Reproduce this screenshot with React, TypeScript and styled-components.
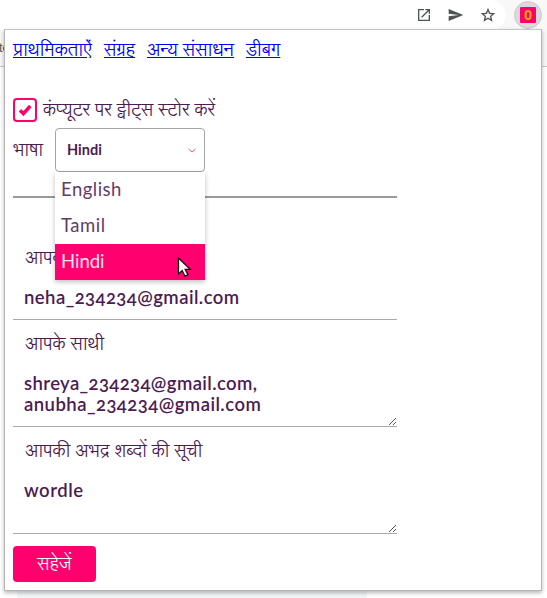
import React from "react";
import styled, { createGlobalStyle, css } from "styled-components";

const PINK = "#ff006e";
const PLUM = "#4c1b52";

const GlobalStyle = createGlobalStyle`
  * { box-sizing: border-box; }
  html, body { margin: 0; padding: 0; background: #fff; overflow: hidden; }
`;

const Browser = styled.div`
  position: relative;
  width: 547px;
  height: 598px;
  overflow: hidden;
  background: #fff;
  color: ${PLUM};
  font-family: Lato, "Lohit Devanagari", "Noto Sans Devanagari", "Noto Sans", sans-serif;
`;

const ChromeBar = styled.div`
  height: 30px;
  background: #f8f8f8;
  display: flex;
`;

const AddressBar = styled.div`
  width: 506px;
  height: 30px;
  background: #fff;
  border-radius: 0 15px 15px 0;
  display: flex;
  align-items: center;
  justify-content: flex-end;
  gap: 16px;
  padding-right: 10px;
`;

const ExtensionButton = styled.div`
  width: 28px;
  height: 28px;
  margin: 1px 0 0 8px;
  border-radius: 50%;
  background: #dadada;
  border: 1px solid #cacaca;
  display: flex;
  align-items: center;
  justify-content: center;
`;

const Badge = styled.div`
  width: 16px;
  height: 16px;
  border-radius: 1px;
  background: ${PINK};
  color: #ffa500;
  font: bold 14px/16px "Open Sans", sans-serif;
  text-align: center;
`;

const BookmarkBar = styled.div`
  height: 37px;
  background: #f7f7f7;
  border-bottom: 1px solid #c8c8c8;
  color: #555;
  font: 13px/35px "Liberation Sans", sans-serif;
  text-indent: -1px;
`;

const Popup = styled.main`
  position: absolute;
  left: 4px;
  top: 29px;
  width: 538px;
  height: 562px;
  padding: 7px 8px 0;
  background: #fff;
  border: 1px solid #b5b5b5;
  border-top-color: #c6c6c6;
  box-shadow: 0 2px 4px rgba(0, 0, 0, 0.28);
`;

const Latin = styled.span<{ $track?: number }>`
  letter-spacing: ${(p) => p.$track ?? 0}px;
  font-feature-settings: "onum" 1;
  white-space: pre;
`;

const Hindi = styled.span`
  font-size: 17.900px;
  font-weight: 300;
  white-space: pre;
`;

const Nav = styled.nav`
  display: flex;
  height: 61px;
  line-height: 24px;
`;

const NavLink = styled.a<{ $width: number }>`
  width: ${(p) => p.$width}px;
  margin-right: 12px;
  height: 24px;
  font-size: 18px;
  font-weight: 300;
  line-height: 24px;
  white-space: nowrap;
  color: #0000ee;
  text-decoration: underline;
`;

const CheckRow = styled.label`
  display: flex;
  align-items: center;
  height: 24px;
  gap: 6px;

  ${Hindi} {
    padding-top: 2px;
  }
`;

const CheckBox = styled.span`
  width: 24px;
  height: 24px;
  border: 2px solid ${PINK};
  border-radius: 4px;
  display: flex;
  align-items: center;
  justify-content: center;
`;

const LanguageRow = styled.div`
  display: flex;
  align-items: center;
  height: 44px;
  margin-top: 6px;
`;

const LanguageLabel = styled.span`
  width: 42px;
  padding-top: 2px;
  white-space: nowrap;
`;

const SelectWrap = styled.div`
  position: relative;
  width: 150px;
  height: 44px;
`;

const SelectButton = styled.div`
  height: 44px;
  border: 1px solid #a5a5a5;
  border-radius: 4px;
  padding: 0 7px 1px 11px;
  display: flex;
  align-items: center;
  justify-content: space-between;
  font-size: 14.500px;
  font-weight: 700;
  line-height: 18px;
`;

const Menu = styled.div`
  position: absolute;
  z-index: 2;
  top: 44px;
  left: 0;
  width: 150px;
  background: #fff;
  box-shadow: 0 2px 5px rgba(0, 0, 0, 0.25);
`;

const MenuItem = styled.div<{ $active?: boolean }>`
  height: 36px;
  padding-left: 6px;
  font-size: 18.500px;
  font-weight: 400;
  line-height: 35px;
  color: #643a69;
  ${(p) => p.$active && css`
    background: ${PINK};
    color: #ffe3ef;
  `}
`;

const Cursor = styled.svg`
  position: absolute;
  left: 122px;
  top: 85px;
`;

const Rule = styled.hr`
  width: 384px;
  height: 2px;
  margin: 24px 0 36px;
  border: 0;
  background: #999;
`;

const Field = styled.section<{ $height: number }>`
  position: relative;
  width: 384px;
  height: ${(p) => p.$height}px;
  padding: 11px 11px 0;
  border-bottom: 1px solid #aaa;
`;

const FieldLabel = styled.div`
  height: 24px;
  padding-left: 1px;
  line-height: 24px;
`;

const FieldValue = styled.div`
  margin-top: 18px;
  font-size: 18.500px;
  font-weight: 600;
  line-height: 21px;
  display: flex;
  flex-direction: column;
`;

const Grip = styled.svg`
  position: absolute;
  right: 0;
  bottom: 1px;
`;

const SaveButton = styled.button`
  display: block;
  width: 83px;
  height: 36px;
  margin-top: 12px;
  padding: 0;
  border: 0;
  border-radius: 4px;
  background: ${PINK};
  color: #fff;
  font-family: inherit;
  line-height: 34px;
`;

const PageBlock = styled.div`
  position: absolute;
  left: 17px;
  top: 588px;
  width: 350px;
  height: 10px;
  background: #f3f6f6;
`;

const ResizeGrip = () => (
  <Grip width="8" height="8" viewBox="0 0 8 8" shapeRendering="crispEdges" fill="#555">
    {[0, 1, 2, 3, 4, 5, 6].map((i) => (
      <rect key={i} x={i} y={7 - i} width="1" height="1" />
    ))}
    {[4, 5, 6].map((i) => (
      <rect key={i} x={i} y={11 - i} width="1" height="1" />
    ))}
  </Grip>
);

export default function App() {
  return (
    <>
      <GlobalStyle />
      <Browser>
        <ChromeBar>
          <AddressBar>
            <svg width="16" height="16" viewBox="0 0 24 24" fill="#505356">
              <path d="M19 19H5V5h7V3H3v18h18v-9h-2v7zM14 3v2h3.6l-9.8 9.8 1.4 1.4L19 6.4V10h2V3h-7z" />
            </svg>
            <svg width="16" height="16" viewBox="0 0 24 24" fill="#505356">
              <path d="M1 21 23 12 1 3v7l15 2-15 2z" />
            </svg>
            <svg width="16" height="16" viewBox="0 0 24 24" fill="#505356">
              <path d="m23 9.2-7.9-.7L12 1 8.900 8.500 1 9.200l6 5.200L5.200 22 12 18l6.800 4-1.800-7.600zM12 15.800l-3.800 2.300 1-4.300-3.300-2.900 4.400-.4L12 6.400l1.700 4.100 4.400.4-3.300 2.900 1 4.300z" />
            </svg>
          </AddressBar>
          <ExtensionButton>
            <Badge>0</Badge>
          </ExtensionButton>
        </ChromeBar>
        <BookmarkBar>te</BookmarkBar>
        <PageBlock />
        <Popup>
          <Nav>
            <NavLink $width={79}>प्राथमिकताऐं</NavLink>
            <NavLink $width={31}>संग्रह</NavLink>
            <NavLink $width={87}>अन्य संसाधन</NavLink>
            <NavLink $width={35}>डीबग</NavLink>
          </Nav>
          <CheckRow>
            <CheckBox>
              <svg width="14" height="14" viewBox="0 0 14 14" fill="none" stroke={PINK} strokeWidth="3.500">
                <path d="m2 7.300 3.400 3.400L12.300 3" />
              </svg>
            </CheckBox>
            <Hindi>कंप्यूटर पर ट्वीट्स स्टोर करें</Hindi>
          </CheckRow>
          <LanguageRow>
            <LanguageLabel><Hindi>भाषा</Hindi></LanguageLabel>
            <SelectWrap>
              <SelectButton>
                <Latin>Hindi</Latin>
                <svg width="10" height="10" viewBox="0 0 10 10" fill="none" stroke="#ff4d99" strokeWidth="1">
                  <path d="m1.500 4 3.500 3 3.500-3" />
                </svg>
              </SelectButton>
              <Menu>
                <MenuItem><Latin $track={0.48}>English</Latin></MenuItem>
                <MenuItem><Latin $track={0.5}>Tamil</Latin></MenuItem>
                <MenuItem $active><Latin>Hindi</Latin></MenuItem>
                <Cursor width="15" height="21" viewBox="0 0 15 21">
                  <path d="M1.500 1v16l3.700-3.500 2.700 5.700 3-1.400-2.700-5.400h5z" fill="#fff" stroke="#111" strokeWidth="1.300" />
                </Cursor>
              </Menu>
            </SelectWrap>
          </LanguageRow>
          <Rule />
          <Field $height={86}>
            <FieldLabel><Hindi>आपका</Hindi></FieldLabel>
            <FieldValue><Latin $track={0.44}>neha_234234@gmail.com</Latin></FieldValue>
          </Field>
          <Field $height={107}>
            <FieldLabel><Hindi>आपके साथी</Hindi></FieldLabel>
            <FieldValue>
              <Latin $track={0.39}>shreya_234234@gmail.com,</Latin>
              <Latin $track={0.46}>anubha_234234@gmail.com</Latin>
            </FieldValue>
            <ResizeGrip />
          </Field>
          <Field $height={107}>
            <FieldLabel><Hindi>आपकी अभद्र शब्दों की सूची</Hindi></FieldLabel>
            <FieldValue><Latin $track={0.55}>wordle</Latin></FieldValue>
            <ResizeGrip />
          </Field>
          <SaveButton><Hindi>सहेजें</Hindi></SaveButton>
        </Popup>
      </Browser>
    </>
  );
}
